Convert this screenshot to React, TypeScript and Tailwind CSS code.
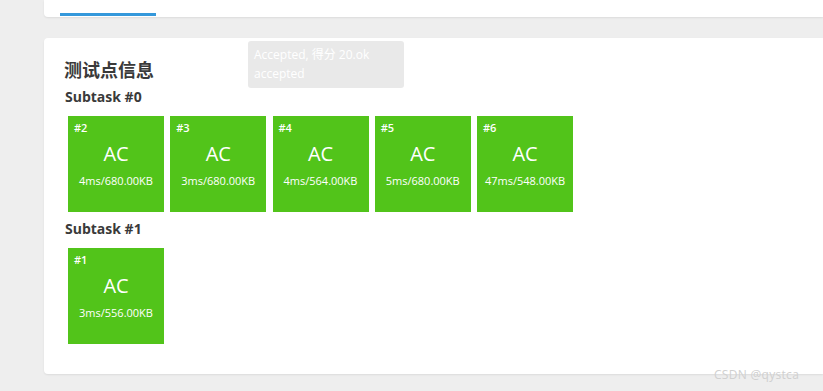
import React from 'react';

const groups = [
  {
    name: 'Subtask #0',
    cases: [
      { id: 2, time: '4ms', mem: '680.00KB' },
      { id: 3, time: '3ms', mem: '680.00KB' },
      { id: 4, time: '4ms', mem: '564.00KB' },
      { id: 5, time: '5ms', mem: '680.00KB' },
      { id: 6, time: '47ms', mem: '548.00KB' },
    ],
  },
  {
    name: 'Subtask #1',
    cases: [{ id: 1, time: '3ms', mem: '556.00KB' }],
  },
];

function CaseBox({ id, time, mem }: { id: number; time: string; mem: string }) {
  return (
    <div className="w-[96px] h-[96px] bg-[#52c41a] text-white flex flex-col px-[6px] pt-[6px]">
      <div className="text-[11px] font-semibold leading-none">#{id}</div>
      <div className="mt-[9px] text-center text-[20px] leading-[24px]">AC</div>
      <div className="mt-[8px] text-center text-[11px] leading-[14px] whitespace-nowrap">
        {time}/{mem}
      </div>
    </div>
  );
}

export default function App() {
  return (
    <div
      className="relative w-full h-[391px] overflow-hidden bg-[#eeeeee]"
      style={{ fontFamily: '"Open Sans", "Noto Sans CJK SC", sans-serif' }}
    >
      <div className="ml-[44px] h-[17px] bg-white rounded-bl-[4px] shadow-[0_1px_2px_rgba(0,0,0,0.08)] flex items-end pl-[16px] pb-[1px]">
        <div className="w-[96px] h-[3px] bg-[#3498db]" />
      </div>

      <div className="ml-[44px] mt-[21px] h-[336px] bg-white rounded-l-[4px] shadow-[0_1px_2px_rgba(0,0,0,0.08)] pl-[20px] pt-[18px] flex flex-col">
        <h2 className="text-[18px] font-bold leading-[28px] text-[#3a3a3a]">测试点信息</h2>
        {groups.map((g) => (
          <section key={g.name} className="flex flex-col">
            <div className="mt-[4px] text-[14px] font-bold leading-[18px] text-[#3a3a3a] pl-[1px]">{g.name}</div>
            <div className="flex gap-[6.25px] ml-[4px] mt-[10px] mb-[4px]">
              {g.cases.map((c) => (
                <CaseBox key={c.id} {...c} />
              ))}
            </div>
          </section>
        ))}
      </div>

      <div className="absolute left-[248px] top-[41px] w-[156px] h-[47px] rounded-[3px] bg-[#e9e9e9] px-[6px] pt-[4px] text-[12px] leading-[19px] text-white">
        <div>Accepted, 得分 20.ok</div>
        <div>accepted</div>
      </div>

      <div className="absolute left-[714px] top-[367px] text-[12px] leading-[16px] text-[#d0d0d0] tracking-[0.3px]">
        CSDN @qystca
      </div>
    </div>
  );
}
